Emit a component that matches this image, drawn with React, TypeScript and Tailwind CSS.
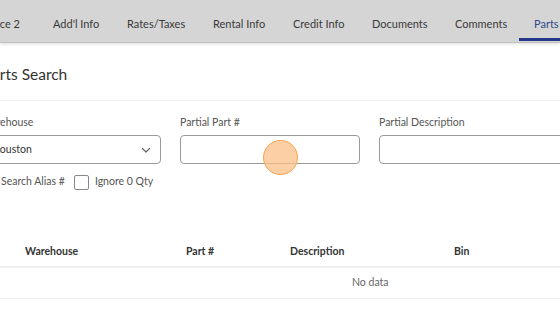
import React from "react";

const tabs: { t: string; w: string }[] = [
  { t: "Add'l Info", w: "w-[74px]" },
  { t: "Rates/Taxes", w: "w-[86px]" },
  { t: "Rental Info", w: "w-[80px]" },
  { t: "Credit Info", w: "w-[79px]" },
  { t: "Documents", w: "w-[83px]" },
  { t: "Comments", w: "w-[79px]" },
];

export default function App() {
  return (
    <div
      className="relative w-[560px] h-[315px] overflow-hidden bg-white text-[#333]"
      style={{ fontFamily: 'Lato, "Noto Sans", sans-serif' }}
    >
      {/* Tab bar */}
      <div className="h-[43px] bg-[#d5d5d5] border-b border-[#c2c2c2] shadow-[0_1px_3px_rgba(0,0,0,0.15)] flex items-stretch">
        <div className="flex items-stretch ml-[-63px] shrink-0">
          <div className="w-[100px] shrink-0 flex items-center justify-end pr-[17px] pt-[7px] text-[11px] text-[#3a3a3a] whitespace-nowrap">
            Invoice 2
          </div>
          {tabs.map(({ t, w }) => (
            <div
              key={t}
              className={w + " shrink-0 flex items-center pl-[16px] pt-[7px] text-[11px] text-[#3a3a3a] whitespace-nowrap"}
            >
              {t}
            </div>
          ))}
          <div className="relative w-[60px] shrink-0 flex items-center pl-[16px] pt-[7px] text-[11px] text-[#2d4a8a] whitespace-nowrap">
            Parts
            <div className="absolute left-[1px] right-0 bottom-[1px] h-[3px] bg-[#24388a]" />
          </div>
        </div>
      </div>

      {/* Title */}
      <div className="h-[58px] flex items-center pt-[6px] ml-[-17px] border-b border-[#efefef]">
        <span className="text-[15.5px] text-[#333]">Parts Search</span>
      </div>

      {/* Form */}
      <div className="ml-[-19px] pt-[14px]">
        <div className="flex gap-[19px]">
          <div className="w-[180px] shrink-0 flex flex-col">
            <label className="text-[10.5px] text-[#555] leading-[14px]">Warehouse</label>
            <div className="mt-[6px] h-[29px] border border-[#9a9a9a] rounded-[4px] flex items-center justify-between pl-[10px] pr-[8px]">
              <span className="text-[10.5px] text-[#333]">Houston</span>
              <svg width="12" height="12" viewBox="0 0 12 12" fill="none">
                <path d="M2.5 4.5 L6 8 L9.5 4.5" stroke="#666" strokeWidth="1.2" strokeLinecap="round" strokeLinejoin="round" />
              </svg>
            </div>
          </div>
          <div className="w-[180px] shrink-0 flex flex-col">
            <label className="text-[10.5px] text-[#555] leading-[14px]">Partial Part #</label>
            <div className="mt-[6px] h-[29px] border border-[#9a9a9a] rounded-[4px]" />
          </div>
          <div className="w-[200px] shrink-0 flex flex-col">
            <label className="text-[10.5px] text-[#555] leading-[14px]">Partial Description</label>
            <div className="mt-[6px] h-[29px] border border-[#9a9a9a] rounded-[4px]" />
          </div>
        </div>

        <div className="flex items-center mt-[10px] h-[16px] text-[10.5px] text-[#555]">
          <div className="w-[14px] h-[14px] border border-[#888] rounded-[2px] bg-white shrink-0" />
          <span className="ml-[6px]">Search Alias #</span>
          <div className="ml-[9px] w-[15px] h-[15px] border border-[#888] rounded-[2px] bg-white shrink-0" />
          <span className="ml-[6px]">Ignore 0 Qty</span>
        </div>
      </div>

      {/* Table */}
      <div className="mt-[48px]">
        <div className="flex items-center h-[30px] border-b-2 border-[#f0f0f0] text-[10.5px] font-bold text-[#333]">
          <div className="w-[25px] shrink-0" />
          <div className="w-[161px] shrink-0">Warehouse</div>
          <div className="w-[104px] shrink-0">Part #</div>
          <div className="w-[164px] shrink-0">Description</div>
          <div>Bin</div>
        </div>
        <div className="h-[31px] flex items-center border-b border-[#eeeeee] text-[10.5px] text-[#666]">
          <span className="ml-[352px]">No data</span>
        </div>
      </div>

      {/* Cursor highlight */}
      <div className="absolute left-[263px] top-[140px] w-[35px] h-[35px] rounded-full bg-[#fbbf86]/75 border border-[#f8a24f]" />
    </div>
  );
}
